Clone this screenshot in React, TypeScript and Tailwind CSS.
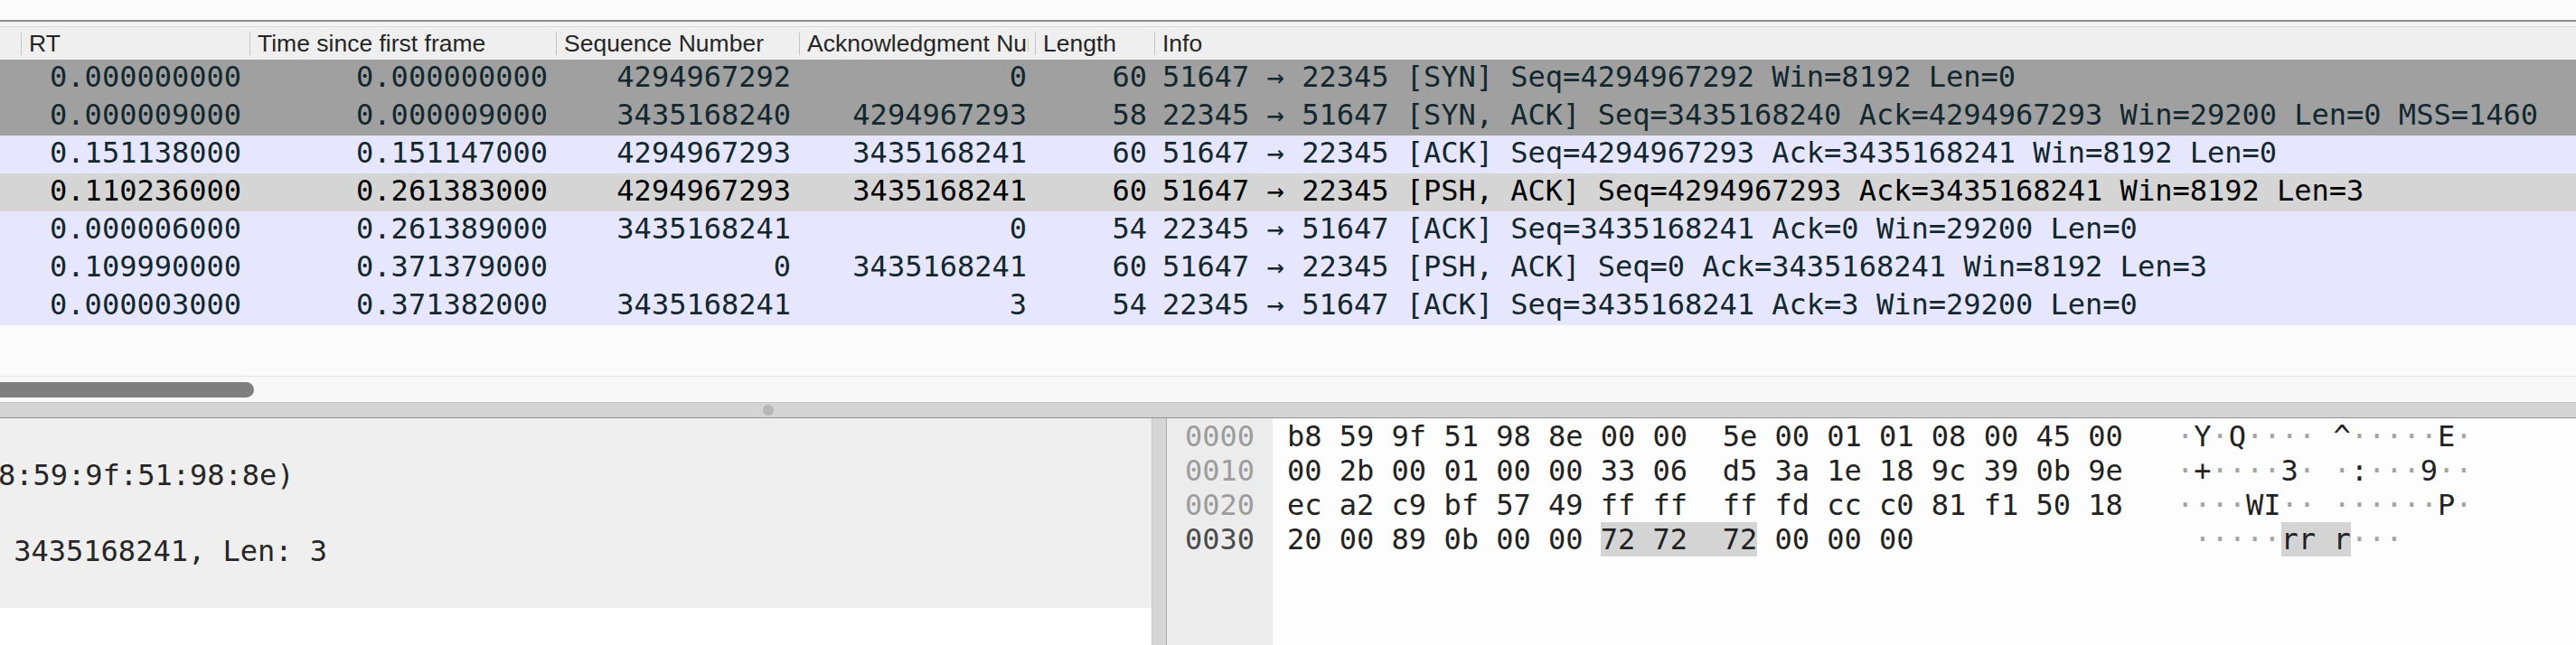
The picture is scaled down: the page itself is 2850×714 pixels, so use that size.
type Packet = {
  rt: string;
  time: string;
  seq: string;
  ack: string;
  len: string;
  info: string;
  tone: string;
};

const SYN = "bg-[#a0a0a0] text-[#12272e]";
const TCP = "bg-[#e7e6ff] text-[#12272e]";
const SEL = "bg-[#d5d5d5] text-[#000000]";

const packets: Packet[] = [
  { rt: "0.000000000", time: "0.000000000", seq: "4294967292", ack: "0", len: "60", info: "51647 → 22345 [SYN] Seq=4294967292 Win=8192 Len=0", tone: SYN },
  { rt: "0.000009000", time: "0.000009000", seq: "3435168240", ack: "4294967293", len: "58", info: "22345 → 51647 [SYN, ACK] Seq=3435168240 Ack=4294967293 Win=29200 Len=0 MSS=1460", tone: SYN },
  { rt: "0.151138000", time: "0.151147000", seq: "4294967293", ack: "3435168241", len: "60", info: "51647 → 22345 [ACK] Seq=4294967293 Ack=3435168241 Win=8192 Len=0", tone: TCP },
  { rt: "0.110236000", time: "0.261383000", seq: "4294967293", ack: "3435168241", len: "60", info: "51647 → 22345 [PSH, ACK] Seq=4294967293 Ack=3435168241 Win=8192 Len=3", tone: SEL },
  { rt: "0.000006000", time: "0.261389000", seq: "3435168241", ack: "0", len: "54", info: "22345 → 51647 [ACK] Seq=3435168241 Ack=0 Win=29200 Len=0", tone: TCP },
  { rt: "0.109990000", time: "0.371379000", seq: "0", ack: "3435168241", len: "60", info: "51647 → 22345 [PSH, ACK] Seq=0 Ack=3435168241 Win=8192 Len=3", tone: TCP },
  { rt: "0.000003000", time: "0.371382000", seq: "3435168241", ack: "3", len: "54", info: "22345 → 51647 [ACK] Seq=3435168241 Ack=3 Win=29200 Len=0", tone: TCP },
];

const columns = [
  { label: "", w: "w-[23px]", sep: false },
  { label: "RT", w: "w-[253px]", sep: true },
  { label: "Time since first frame", w: "w-[339px]", sep: true },
  { label: "Sequence Number", w: "w-[269px]", sep: true },
  { label: "Acknowledgment Number", w: "w-[261px]", sep: true },
  { label: "Length", w: "w-[132px]", sep: true },
  { label: "Info", w: "flex-1", sep: true },
];

// hex rows: offset, bytes before/inside/after the selection, ascii likewise
const hexRows = [
  { off: "0000", dim: true, hex: ["b8 59 9f 51 98 8e 00 00  5e 00 01 01 08 00 45 00", "", ""], ascii: ["·Y·Q···· ^·····E·", "", ""] },
  { off: "0010", dim: true, hex: ["00 2b 00 01 00 00 33 06  d5 3a 1e 18 9c 39 0b 9e", "", ""], ascii: ["·+····3· ·:···9··", "", ""] },
  { off: "0020", dim: true, hex: ["ec a2 c9 bf 57 49 ff ff  ff fd cc c0 81 f1 50 18", "", ""], ascii: ["····WI·· ······P·", "", ""] },
  { off: "0030", dim: false, hex: ["20 00 89 0b 00 00 ", "72 72  72", " 00 00 00"], ascii: [" ·····", "rr r", "···"] },
];

const Ascii = ({ text }: { text: string }) => (
  <>
    {text.split("").map((c, i) =>
      c === "·" ? (
        <span key={i} className="text-[#a3a3a3]">
          ·
        </span>
      ) : (
        <span key={i}>{c}</span>
      )
    )}
  </>
);

export default function App() {
  return (
    <div className="w-[2850px] h-[714px] overflow-hidden flex flex-col bg-[#fbfbfb] font-['DejaVu_Sans_Mono',monospace] text-[32px]">
      <div className="h-[22px] shrink-0 bg-[#fbfbfb]"></div>
      <div className="h-[2px] shrink-0 bg-[#8d8d8d]"></div>
      <div className="h-[5px] shrink-0 bg-[#f3f3f3]"></div>
      <div className="h-[1px] shrink-0 bg-[#d9d9d9]"></div>

      {/* column header */}
      <div className="h-[36px] shrink-0 flex bg-[#efefef] font-['Liberation_Sans',Arial,sans-serif] text-[26.5px] text-[#262626] leading-[36px]">
        {columns.map((c, i) => (
          <div key={i} className={`${c.w} shrink-0 flex items-center min-w-0`}>
            {c.sep && <div className="w-[1px] h-[25px] bg-[#c3c3c3] shrink-0"></div>}
            <div className="flex-1 min-w-0 overflow-hidden whitespace-nowrap pl-[8px] mr-[7px]">{c.label}</div>
          </div>
        ))}
      </div>

      {/* packet list */}
      <div className="shrink-0 flex flex-col">
        {packets.map((p, i) => (
          <div key={i} className={`h-[42px] flex leading-[38px] whitespace-pre ${p.tone}`}>
            <div className="w-[23px] shrink-0"></div>
            <div className="w-[253px] shrink-0 text-right pr-[9px]">{p.rt}</div>
            <div className="w-[339px] shrink-0 text-right pr-[9px]">{p.time}</div>
            <div className="w-[269px] shrink-0 text-right pr-[9px]">{p.seq}</div>
            <div className="w-[261px] shrink-0 text-right pr-[9px]">{p.ack}</div>
            <div className="w-[132px] shrink-0 text-right pr-[8px]">{p.len}</div>
            <div className="flex-1 pl-[9px] overflow-hidden">{p.info}</div>
          </div>
        ))}
      </div>

      <div className="h-[56px] shrink-0"></div>

      {/* horizontal scrollbar */}
      <div className="h-[29px] shrink-0 border-t border-[#e3e3e3] bg-[#f8f8f8] flex items-center">
        <div className="w-[281px] h-[17px] rounded-r-full bg-[#7f7f7f]"></div>
      </div>

      {/* splitter */}
      <div className="h-[18px] shrink-0 border-t border-[#c6c6c6] border-b border-b-[#929292] bg-[#d5d5d5] flex items-center pl-[844px]">
        <div className="w-[12px] h-[12px] rounded-full bg-[#b6b6b6]"></div>
      </div>

      {/* details + bytes */}
      <div className="flex-1 flex min-h-0">
        <div className="w-[1274px] shrink-0 flex flex-col bg-white text-[#262626] leading-[42px] whitespace-pre overflow-hidden">
          <div className="h-[210px] bg-[#efefef] flex flex-col">
            <div className="h-[42px]"></div>
            <div className="h-[42px] -ml-[2px]">8:59:9f:51:98:8e)</div>
            <div className="h-[42px]"></div>
            <div className="h-[42px] -ml-[4px]"> 3435168241, Len: 3</div>
            <div className="h-[42px]"></div>
          </div>
        </div>
        <div className="w-[17px] shrink-0 border-l border-[#c9c9c9] border-r border-r-[#a9a9a9] bg-[#d6d6d6]"></div>
        <div className="flex-1 flex bg-[#fdfdfd] text-[#222222] leading-[38px] whitespace-pre">
          <div className="w-[117px] shrink-0 bg-[#ececec] pl-[20px] pt-[1px] flex flex-col">
            {hexRows.map((r) => (
              <div key={r.off} className={r.dim ? "text-[#9c9c9c]" : "text-[#4b4b4b]"}>
                {r.off}
              </div>
            ))}
          </div>
          <div className="flex-1 pl-[16px] pt-[1px] flex flex-col">
            {hexRows.map((r) => (
              <div key={r.off} className="flex">
                <span className="w-[925px] shrink-0">
                  {r.hex[0]}
                  {r.hex[1] && <span className="bg-[#d4d4d4]">{r.hex[1]}</span>}
                  {r.hex[2]}
                </span>
                <span className="ml-[59px]">
                  <Ascii text={r.ascii[0]} />
                  {r.ascii[1] && (
                    <span className="bg-[#d4d4d4]">
                      <Ascii text={r.ascii[1]} />
                    </span>
                  )}
                  <Ascii text={r.ascii[2]} />
                </span>
              </div>
            ))}
          </div>
        </div>
      </div>
    </div>
  );
}
